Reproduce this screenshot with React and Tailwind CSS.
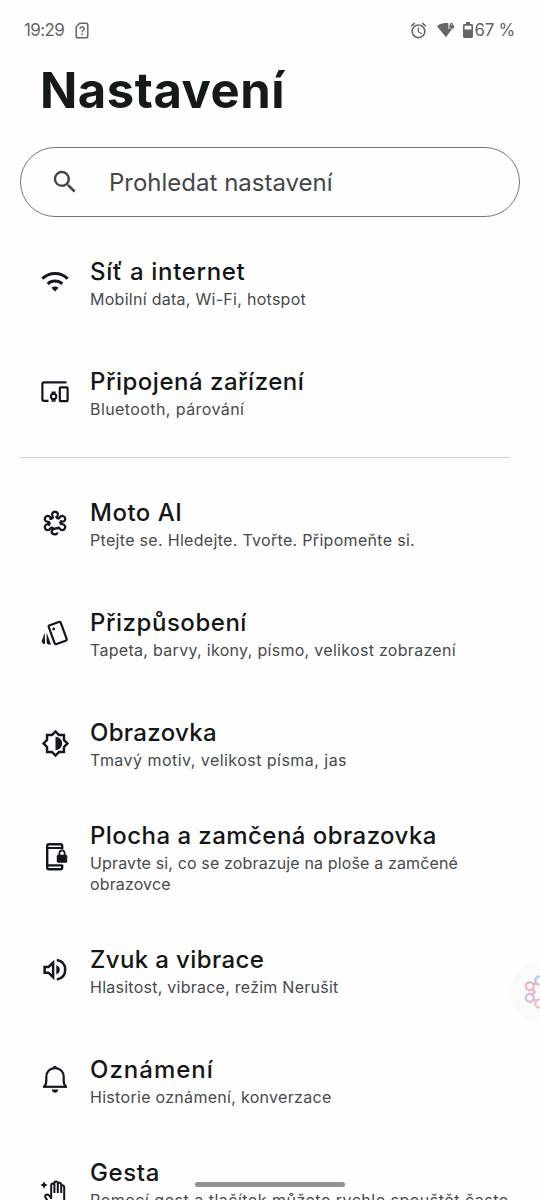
import React from 'react'
import { MdSearch, MdAccessAlarm, MdOutlineBrightness6 } from 'react-icons/md'

const WifiIcon = () => (
  <svg viewBox="0 0 32 32" className="size-8" fill="none" stroke="currentColor" strokeWidth="2.9">
    <path d="M3.3 12.8C10.2 5.7 21.8 5.7 28.7 12.8" />
    <path d="M8.7 17.9C12.8 14.1 19.2 14.1 23.3 17.9" />
    <path d="M12.4 21.8Q16 19.2 19.6 21.8L16 25.4Z" fill="currentColor" stroke="none" />
  </svg>
)

const DevicesIcon = () => (
  <svg viewBox="0 0 32 32" className="size-8" fill="none" stroke="currentColor" strokeWidth="2.2">
    <path d="M27.5 6.3H5Q3.4 6.3 3.4 7.9V23.3Q3.4 24.9 5 24.9H9.5" />
    <rect x="20.8" y="11.3" width="7.8" height="13.8" rx="0.8" />
    <circle cx="14.6" cy="20.4" r="2.7" strokeWidth="2" />
    <path d="M13.2 17.8L13.4 16.2H15.8L16 17.8M13.2 23L13.4 25H15.8L16 23" strokeWidth="1.5" />
  </svg>
)

const petal = 'M-4.6 -4.2C-2.6 -4.6 -1.8 -5.4 -2.4 -6.6C-5.4 -12.8 5.4 -12.8 2.4 -6.6C1.9 -5.6 2.3 -5 3.2 -4.8'

const MotoIcon = () => (
  <svg viewBox="0 0 32 32" className="size-8" fill="none" stroke="currentColor" strokeWidth="2.3" strokeLinecap="round">
    <g transform="translate(16 16)">
      <path d={petal} />
      <path d={petal} transform="rotate(60)" />
      <path d={petal} transform="rotate(120)" />
      <path d="M-3.8 -5C-1 -5.2 3.2 -5.8 3.4 -8.6C3.3 -11.4 -0.6 -12 -2.2 -10.4" transform="rotate(180)" />
      <path d={petal} transform="rotate(240)" />
      <path d={petal} transform="rotate(300)" />
    </g>
  </svg>
)

const StyleIcon = () => (
  <svg viewBox="0 0 32 32" className="size-8" fill="none" stroke="currentColor" strokeWidth="2.2">
    <rect x="-6.4" y="-9.9" width="12.8" height="19.8" rx="1.6" transform="translate(18.7 16) rotate(-20)" />
    <circle cx="14.7" cy="12" r="1.4" fill="currentColor" stroke="none" />
    <path d="M5.8 15.4L6 27.2L4 26.4Q2.2 25.4 2.9 23.4Z" fill="currentColor" stroke="none" />
    <path d="M7.6 15.5L12 27.6H9.8Q7.6 27.6 7.6 25Z" fill="currentColor" stroke="none" />
  </svg>
)

const LockScreenIcon = () => (
  <svg viewBox="0 0 32 32" className="size-8" fill="none" stroke="currentColor" strokeWidth="2.4">
    <path d="M23.2 8.2V5Q23.2 3.2 21.4 3.2H10Q8.2 3.2 8.2 5V26.4Q8.2 28.2 10 28.2H21.4Q23.2 28.2 23.2 26.4V23.8" />
    <path d="M8.2 7H23.2M8.2 24.4H23.2" strokeWidth="2.2" />
    <rect x="17.8" y="13.8" width="10.4" height="8" rx="1.4" fill="currentColor" stroke="none" />
    <path d="M20.4 14.2V12.2A2.6 2.8 0 0 1 25.6 12.2V14.2" strokeWidth="1.8" />
  </svg>
)

const SoundIcon = () => (
  <svg viewBox="0 0 32 32" className="size-8" fill="none" stroke="currentColor" strokeWidth="2.5">
    <path d="M5.6 12.9H9.5L14.1 8.6V23.2L9.5 18.7H5.6Z" />
    <path d="M17.3 11Q20.8 12.7 20.8 15.8Q20.8 18.9 17.3 20.6Z" fill="currentColor" stroke="none" />
    <path d="M17.8 6C23.2 7 26.2 10.6 26.2 15.8C26.2 21 23.2 24.6 17.8 25.6" />
  </svg>
)

const BellIcon = () => (
  <svg viewBox="0 0 32 32" className="size-8" fill="none" stroke="currentColor" strokeWidth="2.2">
    <path d="M4 22.8H28" />
    <path d="M5 22.6C7 21 7.3 19.5 7.3 16.5V12.8C7.3 7.5 11 4.2 16 4.2S24.7 7.5 24.7 12.8V16.5C24.7 19.5 25 21 27 22.6" />
    <path d="M14.6 4Q16 1.8 17.4 4" />
    <path d="M12.6 25.6H19.4Q18.4 28.8 16 28.8T12.6 25.6Z" fill="currentColor" stroke="none" />
  </svg>
)

const GestureIcon = () => (
  <svg viewBox="0 0 32 32" className="size-8 -translate-y-px" fill="none" stroke="currentColor" strokeWidth="2" strokeLinejoin="round">
    <path d="M5 4Q5.6 7.5 9 8.1Q5.6 8.7 5 12.2Q4.4 8.7 1 8.1Q4.4 7.5 5 4Z" fill="currentColor" stroke="none" />
    <path d="M12.2 22V8.2Q12.2 6.4 13.8 6.4T15.4 8V16M15.4 8V6Q15.4 4.6 17.2 4.6T18.8 6V16M18.8 6.6Q19.2 5.6 20.6 5.8T22.2 7.4V16M22.2 9Q22.8 8 24 8.4T25.2 10.4V26Q25.2 30 20 30H14Q12 30 11 28L6.2 20Q5.8 17.4 8.6 17.4Q10 17.6 12.2 21.4" />
  </svg>
)

const groups = [
  [
    { icon: WifiIcon, title: 'Síť a internet', text: 'Mobilní data, Wi-Fi, hotspot', t: 'tracking-[0.64px]', s: 'tracking-[0.28px]' },
    { icon: DevicesIcon, title: 'Připojená zařízení', text: 'Bluetooth, párování', t: 'tracking-[0.5px]', s: 'tracking-[0.42px]' },
  ],
  [
    { icon: MotoIcon, title: 'Moto AI', text: 'Ptejte se. Hledejte. Tvořte. Připomeňte si.', t: 'tracking-[0.5px]', s: 'tracking-[0.31px]' },
    { icon: StyleIcon, title: 'Přizpůsobení', text: 'Tapeta, barvy, ikony, písmo, velikost zobrazení', t: 'tracking-[0.53px]', s: 'tracking-[0.3px]' },
    { icon: () => <MdOutlineBrightness6 className="mx-[1.5px] size-[29px]" />, title: 'Obrazovka', text: 'Tmavý motiv, velikost písma, jas', t: 'tracking-[0.32px]', s: 'tracking-[0.46px]' },
    { icon: LockScreenIcon, title: 'Plocha a zamčená obrazovka', text: 'Upravte si, co se zobrazuje na ploše a zamčené obrazovce', t: 'tracking-[0.45px]', s: 'tracking-[0.14px]' },
    { icon: SoundIcon, title: 'Zvuk a vibrace', text: 'Hlasitost, vibrace, režim Nerušit', t: 'tracking-[0.38px]', s: 'tracking-[0.25px]' },
    { icon: BellIcon, title: 'Oznámení', text: 'Historie oznámení, konverzace', t: 'tracking-[1px]', s: 'tracking-[0.3px]' },
    { icon: GestureIcon, title: 'Gesta', text: 'Pomocí gest a tlačítek můžete rychle spouštět často používané funkce', t: 'tracking-[0.6px]', s: 'tracking-[0.5px]' },
  ],
]

const Row = ({ item }) => {
  const Icon = item.icon
  return (
    <li className="flex min-h-[110px] items-center pt-[23px] pb-5 pl-[39px] pr-7 text-[#12161f]">
      <div className="-mt-[3px]"><Icon /></div>
      <div className="ml-[19px] flex-1">
        <h2 className={`mb-[3px] text-2xl leading-[29px] font-medium whitespace-nowrap text-[#141717] ${item.t}`}>{item.title}</h2>
        <p className={`text-base leading-[21px] text-[#474a4a] ${item.s}`}>{item.text}</p>
      </div>
    </li>
  )
}

const StatusBar = () => (
  <header className="flex h-[60px] items-center pl-6 pr-[25px] text-[17px] text-[#666]">
    <span className="mt-[2px] tracking-[-0.6px]">19:29</span>
    <svg viewBox="0 0 14 17" className="ml-[11px] h-[17px] w-[14px]" fill="none" stroke="currentColor" strokeWidth="1.5">
      <path d="M4.8 1.2H11Q12.8 1.2 12.8 3V14Q12.8 15.8 11 15.8H3Q1.2 15.8 1.2 14V4.8Z" />
      <path d="M4.8 6.8Q5 5 7 5T9.2 6.8C9.2 8.3 7 8.2 7 10.2M7 11.6V13.1" strokeWidth="1.4" />
    </svg>
    <MdAccessAlarm className="ml-auto size-[19px]" />
    <svg viewBox="0 0 20 18" className="ml-[8px] h-[18px] w-5" fill="currentColor">
      <path d="M1 5.2C4 2.4 8.5 1.4 12.4 2.2V7.8H16.2L10 16.2Z" />
      <path fillRule="evenodd" d="M14 4.2V3.2A1.5 1.5 0 0 1 17 3.2V4.2H18V7.6H13.4V4.2ZM15 4.2H16V3.3H15Z" />
    </svg>
    <svg viewBox="0 0 10 18" className="ml-[7px] h-[18px] w-[10px]" fill="currentColor">
      <path fillRule="evenodd" d="M3 1H7V3H8.6Q10 3 10 4.4V15.6Q10 17 8.6 17H1.4Q0 17 0 15.6V4.4Q0 3 1.4 3H3ZM1.6 4.8V8.5H8.4V4.8Z" />
    </svg>
    <span className="mt-[2px] ml-[2px] tracking-[-0.3px]">67 %</span>
  </header>
)

// floating assistant button, half hidden behind the screen edge
const AssistantBubble = () => (
  <button className="absolute top-[962px] -right-[30px] flex size-[60px] items-center justify-center rounded-full bg-[#fafafb]">
    <svg viewBox="0 0 32 32" className="size-11" fill="none" strokeWidth="1.7" strokeLinecap="round">
      <defs>
        <linearGradient id="moto" x1="0" y1="0" x2="0" y2="32" gradientUnits="userSpaceOnUse">
          <stop offset="0.15" stopColor="#9ccbfb" />
          <stop offset="0.35" stopColor="#f8b5b2" />
          <stop offset="0.62" stopColor="#cbbdee" />
          <stop offset="0.85" stopColor="#fcc4b0" />
        </linearGradient>
      </defs>
      <g stroke="url(#moto)">
        <circle cx="15.6" cy="7.6" r="3" />
        <circle cx="8.6" cy="11.8" r="2.9" />
        <circle cx="8.6" cy="20.2" r="2.9" />
        <circle cx="15.6" cy="24.4" r="3" />
        <path d="M11.2 10.2L13 10M10.6 14L12.2 16L10.6 18M11.2 21.8L13 22.2" />
      </g>
    </svg>
  </button>
)

export default function App() {
  return (
    <div className="relative h-[1200px] w-[540px] overflow-hidden bg-[#fefefe] font-['Inter',sans-serif]">
      <StatusBar />
      <h1 className="mt-px ml-10 text-[49px] leading-[60px] font-bold tracking-[0.5px] text-[#141a1a]">Nastavení</h1>
      <div className="mx-5 mt-[26px] flex h-[70px] items-center rounded-full border border-[#747777] pl-[29px] text-[#444748]">
        <MdSearch className="size-[30px]" />
        <span className="mt-[2px] ml-[29px] text-2xl">Prohledat nastavení</span>
      </div>
      <ul className="mt-[10px]">
        {groups[0].map((item) => <Row key={item.title} item={item} />)}
      </ul>
      <hr className="mr-[30px] ml-5 mt-[10px] mb-[10px] border-[#cdd0d0]" />
      <ul>
        {groups[1].map((item) => <Row key={item.title} item={item} />)}
      </ul>
      <AssistantBubble />
      <div className="absolute top-[1182px] left-[195px] h-[5px] w-[150px] rounded-full bg-[#929292]" />
    </div>
  )
}
